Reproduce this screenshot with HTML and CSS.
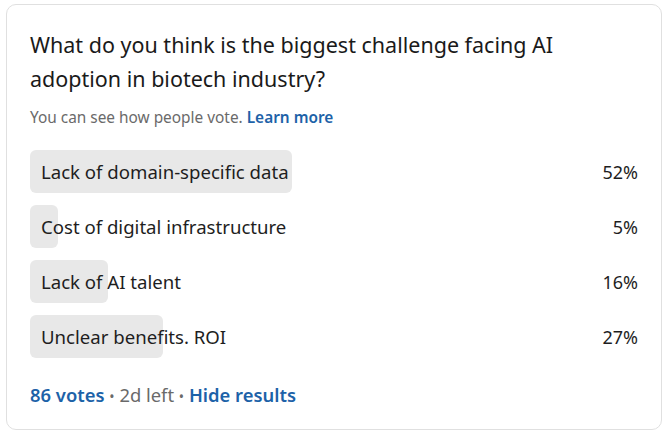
FILE: index.html
```html
<!DOCTYPE html>
<html>
<head>
<meta charset="utf-8">
<link rel="stylesheet" href="styles.css">
</head>
<body>
<div class="card">
  <h1 class="question">What do you think is the biggest challenge facing AI adoption in biotech industry?</h1>
  <p class="note">You can see how people vote. <a class="link">Learn more</a></p>
  <div class="options">
    <div class="option">
      <div class="track"><div class="bar" style="width:262px"></div><span class="label">Lack of domain-specific data</span></div>
      <span class="pct">52%</span>
    </div>
    <div class="option">
      <div class="track"><div class="bar" style="width:28px"></div><span class="label">Cost of digital infrastructure</span></div>
      <span class="pct">5%</span>
    </div>
    <div class="option">
      <div class="track"><div class="bar" style="width:78px"></div><span class="label">Lack of AI talent</span></div>
      <span class="pct">16%</span>
    </div>
    <div class="option">
      <div class="track"><div class="bar" style="width:133px"></div><span class="label">Unclear benefits. ROI</span></div>
      <span class="pct">27%</span>
    </div>
  </div>
  <p class="footer"><a class="link">86 votes</a> <span class="dot">•</span> 2d left <span class="dot">•</span> <a class="link">Hide results</a></p>
</div>
</body>
</html>
```
FILE: styles.css
```css
html, body {
  margin: 0;
  padding: 0;
  background: #ffffff;
}
body {
  font-family: "Noto Sans", "Open Sans", sans-serif;
  color: #1f1f1f;
}
.card {
  box-sizing: border-box;
  margin: 4px 0 0 6px;
  width: 656px;
  height: 426px;
  border: 1px solid #e0e0e0;
  border-radius: 10px;
  padding: 23px 24px 0 23px;
}
.question {
  margin: 0;
  font-size: 21.5px;
  font-weight: 400;
  line-height: 34px;
  color: #1a1a1a;
  width: 580px;
}
.note {
  margin: 11px 0 0 0;
  font-size: 15.4px;
  line-height: 22px;
  color: #6a6a6a;
}
.link {
  color: #1d62a8;
  font-weight: 600;
}
.options {
  margin-top: 21px;
  display: flex;
  flex-direction: column;
  gap: 12px;
}
.option {
  display: flex;
  align-items: center;
  height: 43px;
}
.track {
  position: relative;
  flex: 1;
  height: 43px;
  display: flex;
  align-items: center;
}
.bar {
  position: absolute;
  left: 0;
  top: 0;
  bottom: 0;
  background: #e8e8e8;
  border-radius: 6px;
}
.label {
  position: relative;
  padding-left: 11px;
  font-size: 18.6px;
  color: #1e1e1e;
}
.pct {
  font-size: 18px;
  color: #1e1e1e;
  margin-right: -1px;
}
.footer {
  margin: 25px 0 0 0;
  font-size: 18.4px;
  line-height: 24px;
  color: #6a6a6a;
}
.dot {
  font-size: 14px;
  color: #6a6a6a;
}
```
